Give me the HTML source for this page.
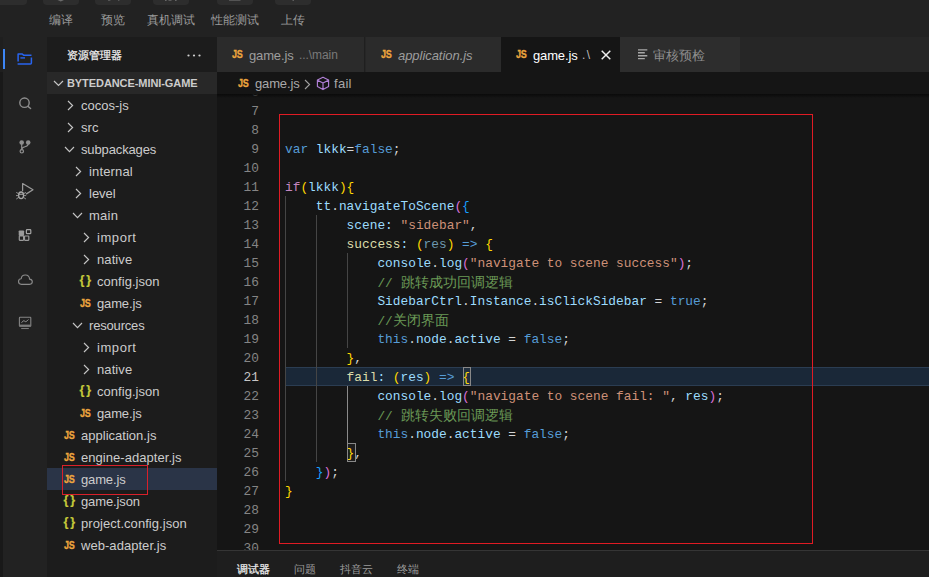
<!DOCTYPE html>
<html><head><meta charset="utf-8"><title>IDE</title>
<style>

html,body{margin:0;padding:0;}
body{width:929px;height:577px;overflow:hidden;background:#222222;position:relative;font-family:"Liberation Sans", sans-serif;font-size:13px;color:#cccccc;}
.abs{position:absolute;}
.tb-btn{position:absolute;top:-6px;height:10.5px;background:#2d2d2d;border-radius:4px;}
.tb-lbl{position:absolute;top:12.5px;height:14px;line-height:14px;font-size:12px;color:#9b9b9b;white-space:nowrap;}
#strip{left:0;top:37px;width:3px;height:540px;background:#191919;}
#act{left:3px;top:37px;width:44px;height:540px;background:#222222;}
#side{left:47px;top:37px;width:170px;height:540px;background:#1c1c1c;overflow:hidden;}
#side .title{position:absolute;left:20px;top:11px;height:14px;line-height:14px;font-size:11px;color:#f0f0f0;white-space:nowrap;-webkit-text-stroke:0.25px #f0f0f0;}
#side .dots{position:absolute;left:140px;top:16.5px;width:14px;height:3px;}
#side .hdr{position:absolute;left:0;top:35px;width:170px;height:22px;background:#282828;}
#side .hdr span{position:absolute;left:20px;top:0;line-height:22px;font-size:11px;font-weight:bold;color:#cccccc;white-space:nowrap;}
.row{position:absolute;left:0;width:170px;height:22px;line-height:22px;white-space:nowrap;color:#cccccc;font-size:13px;}
.row.sel{background:#2a3447;}
.row .lbl{position:absolute;top:1px;}
.row .ic{position:absolute;top:-0.5px;font-weight:bold;font-size:10.5px;line-height:22px;letter-spacing:-0.2px;transform:scaleX(0.86);transform-origin:0 50%;-webkit-text-stroke:0.3px currentColor;}
.ic.js{color:#eca53e;}
.ic.json{color:#c5c93a;font-size:12.5px !important;letter-spacing:1.9px !important;top:-1px !important;transform:none !important;-webkit-text-stroke:0.2px currentColor !important;}
.row svg{position:absolute;}
#ed{left:217px;top:37px;width:712px;height:540px;background:#151515;overflow:hidden;}
#tabs{position:absolute;left:0;top:0;width:712px;height:35px;background:#262626;}
.tab{position:absolute;top:0;height:35px;line-height:35px;font-size:13px;white-space:nowrap;box-sizing:border-box;}
.tab span{position:absolute;top:1px;}
.tab .ic{font-weight:bold;font-size:10.5px;letter-spacing:-0.2px;top:0;transform:scaleX(0.86);transform-origin:0 50%;-webkit-text-stroke:0.3px currentColor;}
#bc{position:absolute;left:0;top:35.5px;width:712px;height:22px;line-height:22px;font-size:13px;color:#a9a9a9;}
#bc span{position:absolute;top:0;white-space:nowrap;}
#bcshadow{position:absolute;left:0;top:57px;width:712px;height:4px;background:linear-gradient(#0a0a0a,rgba(10,10,10,0));}
#code{position:absolute;left:0;top:57px;width:712px;height:456px;overflow:hidden;}
.ln{position:absolute;left:0;width:42px;text-align:right;font-family:"Liberation Mono", monospace;font-size:12.83px;line-height:19px;height:19px;color:#858585;}
.cl{position:absolute;left:68px;font-family:"Liberation Mono", monospace;font-size:12.83px;line-height:19px;height:19px;white-space:pre;color:#d4d4d4;}
.guide{position:absolute;width:1px;background:#3a3a3a;}
.k{color:#569cd6;} .c{color:#c586c0;} .v{color:#9cdcfe;} .f{color:#dcdcaa;} .s{color:#ce9178;} .m{color:#6a9955;}
.cj{font-family:"Liberation Sans", sans-serif;font-size:14px;line-height:19px;}
.b1{color:#ffd700;} .b2{color:#da70d6;} .b3{color:#179fff;} .dim{color:#6d98b0;}
#hl{position:absolute;left:68px;top:273px;width:660px;height:19px;background:#1a2838;box-sizing:border-box;border:1px solid #2b3d52;}
#redbox{position:absolute;left:62px;top:20px;width:534px;height:430px;box-sizing:border-box;border:1px solid #e01b24;}
#panel{position:absolute;left:0;top:513px;width:712px;height:27px;background:#1e1e1e;border-top:1px solid #353535;box-sizing:border-box;}
#panel span{position:absolute;top:11px;font-size:11px;line-height:14px;color:#9a9a9a;white-space:nowrap;}

</style></head><body>
<div class="tb-btn" style="left:-6px;width:33px"></div>
<div class="tb-btn" style="left:43px;width:36px"></div>
<div class="tb-btn" style="left:95px;width:36px"></div>
<div class="tb-btn" style="left:153px;width:36px"></div>
<div class="tb-btn" style="left:217px;width:36px"></div>
<div class="tb-btn" style="left:275px;width:36px"></div>
<svg class="abs" style="left:0;top:0" width="320" height="3" viewBox="0 0 320 3"><path d="M57.5 0 L60.8 1.6 L64 0 Z" fill="#6a6a6a"/><rect x="108" y="0" width="2.4" height="0.8" fill="#5e5e5e"/><rect x="118" y="0" width="1.4" height="0.8" fill="#5e5e5e"/><rect x="165" y="0" width="1.6" height="1" fill="#666"/><rect x="168.5" y="0" width="3" height="0.8" fill="#666"/><rect x="175" y="0" width="1.6" height="1" fill="#666"/><rect x="229" y="0" width="11.5" height="0.9" fill="#5a5a5a"/><rect x="292.6" y="0" width="1.2" height="1" fill="#6a6a6a"/></svg>
<div class="tb-lbl" style="left:49px">编译</div>
<div class="tb-lbl" style="left:101px">预览</div>
<div class="tb-lbl" style="left:147px">真机调试</div>
<div class="tb-lbl" style="left:211px">性能测试</div>
<div class="tb-lbl" style="left:281px">上传</div>
<div id="strip" class="abs"></div><div class="abs" style="left:0;top:37px;width:3px;height:35px;background:#1f1f1f"></div>
<div id="act" class="abs">
<div class="abs" style="left:0;top:12px;width:2px;height:20px;background:#3d86f5"></div>
<svg class="abs" style="left:0;top:0" width="44" height="540" viewBox="3 37 44 540" fill="none" stroke-linecap="round" stroke-linejoin="round">
<!-- folder -->
<path d="M18.1 61.6 V54.1 H22.3 L23.9 55.3 H31.5" stroke="#2864f0" stroke-width="1.5" stroke-linecap="butt"/>
<path d="M31.4 57.4 V63 Q31.4 64 30.4 64 H17.6" stroke="#2864f0" stroke-width="1.5" stroke-linecap="butt"/>
<path d="M20.4 57.9 H25" stroke="#2864f0" stroke-width="1.4" stroke-linecap="butt"/>
<!-- search -->
<circle cx="24.5" cy="102.7" r="4.7" stroke="#8e8e8e" stroke-width="1.4"/>
<path d="M28 106.4 L30.6 108.5" stroke="#8e8e8e" stroke-width="1.4"/>
<!-- git -->
<circle cx="21.7" cy="142.5" r="2.3" fill="#8e8e8e"/>
<circle cx="28.2" cy="142.5" r="2.3" fill="#8e8e8e"/>
<circle cx="21.8" cy="151.3" r="1.7" stroke="#8e8e8e" stroke-width="1.2"/>
<path d="M21.7 144 V149.6 M28.2 144 C28.2 147.6 21.8 146 21.8 149.4" stroke="#8e8e8e" stroke-width="1.2"/>
<!-- debug -->
<path d="M22.6 190.4 V183.5 L33 189.7 L26.4 193.9" stroke="#9a9a9a" stroke-width="1.25"/>
<ellipse cx="21.1" cy="195.3" rx="2.5" ry="3.3" stroke="#a8a8a8" stroke-width="1.3"/>
<path d="M18.8 194.2 H23.4" stroke="#a8a8a8" stroke-width="1.1"/>
<path d="M16.6 192.6 L18.4 193.6 M16.4 195.6 H18.4 M16.6 198.8 L18.6 197.4 M25.6 192.6 L23.8 193.6 M25.8 195.6 H23.8 M25.6 198.8 L23.6 197.4" stroke="#a0a0a0" stroke-width="0.9"/>
<!-- blocks -->
<rect x="18.7" y="230.5" width="5.4" height="5.4" rx="0.8" fill="#9a9a9a"/>
<rect x="19.3" y="236" width="4.3" height="4.3" rx="0.5" stroke="#9a9a9a" stroke-width="1.2"/>
<rect x="24.5" y="236" width="4.3" height="4.3" rx="0.5" stroke="#9a9a9a" stroke-width="1.2"/>
<rect x="26.4" y="229.7" width="4.4" height="4" rx="0.8" stroke="#a5a5a5" stroke-width="1.2"/>
<!-- cloud -->
<path d="M21.4 284.3 H29.6 C33.2 284.3 33.2 279.4 29.6 279.1 C29.2 273.8 21.8 273.6 21.2 278.7 C17.6 278.8 17.6 284.3 21.4 284.3 Z" stroke="#8a8a8a" stroke-width="1.15"/>
<!-- monitor -->
<rect x="19.4" y="317.3" width="11.4" height="9" rx="0.6" stroke="#858585" stroke-width="1.1"/>
<rect x="19.4" y="324.6" width="11.4" height="1.9" fill="#7a7a7a"/>
<path d="M21.8 322.4 C22.8 320.6 24 320.4 25 321.4 C25.8 322 26.4 321.6 28.2 319.8" stroke="#a0a0a0" stroke-width="0.9"/>
<path d="M21.2 328.5 H28.8" stroke="#7a7a7a" stroke-width="1.1" stroke-linecap="butt"/>
</svg>
</div>
<div id="side" class="abs">
<div class="title">资源管理器</div>
<svg class="dots" viewBox="0 0 14 3"><circle cx="1.5" cy="1.5" r="1.1" fill="#d0d0d0"/><circle cx="7" cy="1.5" r="1.1" fill="#d0d0d0"/><circle cx="12.5" cy="1.5" r="1.1" fill="#d0d0d0"/></svg>
<div class="hdr"><svg class="abs" style="left:5.5px;top:8px" width="11" height="7" viewBox="0 0 11 7"><path d="M1 1 L5.5 5.5 L10 1" fill="none" stroke="#c5c5c5" stroke-width="1.2"/></svg><span style="letter-spacing:-0.079px">BYTEDANCE-MINI-GAME</span></div>
<div class="row" style="top:57px">
<svg style="left:20px;top:6px" width="7" height="11" viewBox="0 0 7 11"><path d="M1 1 L5.6 5.5 L1 10" fill="none" stroke="#c5c5c5" stroke-width="1.15"/></svg>
<span class="lbl" style="left:34px;letter-spacing:0.002px">cocos-js</span></div>
<div class="row" style="top:79px">
<svg style="left:20px;top:6px" width="7" height="11" viewBox="0 0 7 11"><path d="M1 1 L5.6 5.5 L1 10" fill="none" stroke="#c5c5c5" stroke-width="1.15"/></svg>
<span class="lbl" style="left:34px;letter-spacing:0.085px">src</span></div>
<div class="row" style="top:101px">
<svg style="left:16.7px;top:8px" width="11" height="7" viewBox="0 0 11 7"><path d="M1 1 L5.5 5.6 L10 1" fill="none" stroke="#c5c5c5" stroke-width="1.15"/></svg>
<span class="lbl" style="left:34px;letter-spacing:-0.13px">subpackages</span></div>
<div class="row" style="top:123px">
<svg style="left:28px;top:6px" width="7" height="11" viewBox="0 0 7 11"><path d="M1 1 L5.6 5.5 L1 10" fill="none" stroke="#c5c5c5" stroke-width="1.15"/></svg>
<span class="lbl" style="left:42px;letter-spacing:0.157px">internal</span></div>
<div class="row" style="top:145px">
<svg style="left:28px;top:6px" width="7" height="11" viewBox="0 0 7 11"><path d="M1 1 L5.6 5.5 L1 10" fill="none" stroke="#c5c5c5" stroke-width="1.15"/></svg>
<span class="lbl" style="left:42px;letter-spacing:-0.01px">level</span></div>
<div class="row" style="top:167px">
<svg style="left:24.7px;top:8px" width="11" height="7" viewBox="0 0 11 7"><path d="M1 1 L5.5 5.6 L10 1" fill="none" stroke="#c5c5c5" stroke-width="1.15"/></svg>
<span class="lbl" style="left:42px;letter-spacing:0.253px">main</span></div>
<div class="row" style="top:189px">
<svg style="left:36px;top:6px" width="7" height="11" viewBox="0 0 7 11"><path d="M1 1 L5.6 5.5 L1 10" fill="none" stroke="#c5c5c5" stroke-width="1.15"/></svg>
<span class="lbl" style="left:50px;letter-spacing:0.562px">import</span></div>
<div class="row" style="top:211px">
<svg style="left:36px;top:6px" width="7" height="11" viewBox="0 0 7 11"><path d="M1 1 L5.6 5.5 L1 10" fill="none" stroke="#c5c5c5" stroke-width="1.15"/></svg>
<span class="lbl" style="left:50px;letter-spacing:0.099px">native</span></div>
<div class="row" style="top:233px">
<span class="ic json" style="left:32.4px">{}</span>
<span class="lbl" style="left:50px;letter-spacing:0.04px">config.json</span></div>
<div class="row" style="top:255px">
<span class="ic js" style="left:33px">JS</span>
<span class="lbl" style="left:50px;letter-spacing:-0.147px">game.js</span></div>
<div class="row" style="top:277px">
<svg style="left:24.7px;top:8px" width="11" height="7" viewBox="0 0 11 7"><path d="M1 1 L5.5 5.6 L10 1" fill="none" stroke="#c5c5c5" stroke-width="1.15"/></svg>
<span class="lbl" style="left:42px;letter-spacing:-0.175px">resources</span></div>
<div class="row" style="top:299px">
<svg style="left:36px;top:6px" width="7" height="11" viewBox="0 0 7 11"><path d="M1 1 L5.6 5.5 L1 10" fill="none" stroke="#c5c5c5" stroke-width="1.15"/></svg>
<span class="lbl" style="left:50px;letter-spacing:0.562px">import</span></div>
<div class="row" style="top:321px">
<svg style="left:36px;top:6px" width="7" height="11" viewBox="0 0 7 11"><path d="M1 1 L5.6 5.5 L1 10" fill="none" stroke="#c5c5c5" stroke-width="1.15"/></svg>
<span class="lbl" style="left:50px;letter-spacing:0.099px">native</span></div>
<div class="row" style="top:343px">
<span class="ic json" style="left:32.4px">{}</span>
<span class="lbl" style="left:50px;letter-spacing:0.04px">config.json</span></div>
<div class="row" style="top:365px">
<span class="ic js" style="left:33px">JS</span>
<span class="lbl" style="left:50px;letter-spacing:-0.147px">game.js</span></div>
<div class="row" style="top:387px">
<span class="ic js" style="left:17px">JS</span>
<span class="lbl" style="left:34px;letter-spacing:0.017px">application.js</span></div>
<div class="row" style="top:409px">
<span class="ic js" style="left:17px">JS</span>
<span class="lbl" style="left:34px;letter-spacing:0.05px">engine-adapter.js</span></div>
<div class="row sel" style="top:431px">
<span class="ic js" style="left:17px">JS</span>
<span class="lbl" style="left:34px;letter-spacing:-0.147px">game.js</span></div>
<div class="row" style="top:453px">
<span class="ic json" style="left:16.4px">{}</span>
<span class="lbl" style="left:34px;letter-spacing:-0.12px">game.json</span></div>
<div class="row" style="top:475px">
<span class="ic json" style="left:16.4px">{}</span>
<span class="lbl" style="left:34px;letter-spacing:0.054px">project.config.json</span></div>
<div class="row" style="top:497px">
<span class="ic js" style="left:17px">JS</span>
<span class="lbl" style="left:34px;letter-spacing:0.046px">web-adapter.js</span></div>
<div class="abs" style="left:15px;top:428px;width:86px;height:30px;box-sizing:border-box;border:1px solid #d9202a"></div>
</div>
<div id="ed" class="abs">
<div id="tabs">
<div class="tab" style="left:0;width:148px;background:#2b2b2b;border-right:1px solid #1f1f1f"><span class="ic js" style="left:15px">JS</span><span style="left:32px;color:#9d9d9d;letter-spacing:-0.147px">game.js</span><span style="left:82px;color:#7a7a7a;font-size:12px;letter-spacing:-0.07px">...\main</span></div>
<div class="tab" style="left:149px;width:135px;background:#2b2b2b"><span class="ic js" style="left:15px">JS</span><span style="left:32px;color:#9d9d9d;font-style:italic;letter-spacing:-0.047px">application.js</span></div>
<div class="tab" style="left:284px;width:119px;background:#151515"><span class="ic js" style="left:15px">JS</span><span style="left:32px;color:#ffffff;letter-spacing:-0.147px">game.js</span><span style="left:81px;color:#bdbdbd;font-size:12px;letter-spacing:1.5px">.\</span><svg class="abs" style="left:99.5px;top:12.5px" width="10" height="10" viewBox="0 0 10 10"><path d="M0.7 0.7 L9.3 9.3 M9.3 0.7 L0.7 9.3" stroke="#f0f0f0" stroke-width="1.45" fill="none"/></svg></div>
<div class="tab" style="left:403px;width:120px;background:#2d2d2d"><svg class="abs" style="left:17.8px;top:11.6px" width="10" height="11" viewBox="0 0 10 11"><path d="M0 0.9 H9.3 M0 3.8 H6.8 M0 6.7 H9.3 M0 9.6 H6.8" stroke="#a8a8a8" stroke-width="1.4" fill="none"/></svg><span style="left:33px;color:#8f8f8f">审核预检</span></div>
</div>
<div id="bc"><span class="ic js" style="left:21px;top:-1px;font-weight:bold;font-size:10.5px;letter-spacing:-0.2px;transform:scaleX(0.86);transform-origin:0 50%;-webkit-text-stroke:0.3px currentColor">JS</span><span style="left:38px;letter-spacing:-0.147px">game.js</span>
<svg class="abs" style="left:87px;top:6px" width="7" height="11" viewBox="0 0 7 11"><path d="M1 1 L5.6 5.5 L1 10" fill="none" stroke="#a0a0a0" stroke-width="1.1"/></svg>
<svg class="abs" style="left:99px;top:3.5px" width="14" height="15" viewBox="0 0 14 15"><path d="M7 1.2 L12.6 4 V10.6 L7 13.6 L1.4 10.6 V4 Z M1.6 4.2 L7 7 L12.4 4.2 M7 7 V13.4" fill="none" stroke="#b180d7" stroke-width="1.15" stroke-linejoin="round"/></svg>
<span style="left:117px;letter-spacing:0.294px">fail</span></div>
<div id="code">
<div id="hl"></div>
<div class="guide" style="left:68px;top:102px;height:285px;background:#454545"></div>
<div class="guide" style="left:99px;top:121px;height:247px;background:#454545"></div>
<div class="guide" style="left:130px;top:159px;height:95px;background:#454545"></div>
<div class="guide" style="left:130px;top:292px;height:57px;background:#8a8a8a"></div>
<div class="ln" style="top:-11px">6</div>
<div class="ln" style="top:8px">7</div>
<div class="ln" style="top:27px">8</div>
<div class="ln" style="top:46px">9</div>
<div class="cl" style="top:46px"><span class="k">var</span> <span class="v">lkkk</span>=<span class="k">false</span>;</div>
<div class="ln" style="top:65px">10</div>
<div class="ln" style="top:84px">11</div>
<div class="cl" style="top:84px"><span class="c">if</span><span class="b1">(</span><span class="v">lkkk</span><span class="b1">){</span></div>
<div class="ln" style="top:103px">12</div>
<div class="cl" style="top:103px">    <span class="v">tt</span>.<span class="v">navigateToScene</span><span class="b2">(</span><span class="b3">{</span></div>
<div class="ln" style="top:122px">13</div>
<div class="cl" style="top:122px">        <span class="v">scene</span><span class="v">:</span> <span class="s">"sidebar"</span>,</div>
<div class="ln" style="top:141px">14</div>
<div class="cl" style="top:141px">        <span class="f">success</span><span class="v">:</span> <span class="b1">(</span><span class="dim">res</span><span class="b1">)</span> <span class="k">=&gt;</span> <span class="b1">{</span></div>
<div class="ln" style="top:160px">15</div>
<div class="cl" style="top:160px">            <span class="v">console</span>.<span class="v">log</span><span class="b2">(</span><span class="s">"navigate to scene success"</span><span class="b2">)</span>;</div>
<div class="ln" style="top:179px">16</div>
<div class="cl" style="top:179px">            <span class="m">// <span class="cj">跳转成功回调逻辑</span></span></div>
<div class="ln" style="top:198px">17</div>
<div class="cl" style="top:198px">            <span class="v">SidebarCtrl</span>.<span class="v">Instance</span>.<span class="v">isClickSidebar</span> = <span class="k">true</span>;</div>
<div class="ln" style="top:217px">18</div>
<div class="cl" style="top:217px">            <span class="m">//<span class="cj">关闭界面</span></span></div>
<div class="ln" style="top:236px">19</div>
<div class="cl" style="top:236px">            <span class="k">this</span>.<span class="v">node</span>.<span class="v">active</span> = <span class="k">false</span>;</div>
<div class="ln" style="top:255px">20</div>
<div class="cl" style="top:255px">        <span class="b1">}</span>,</div>
<div class="ln" style="top:274px;color:#c6c6c6">21</div>
<div class="cl" style="top:274px">        <span class="f">fail</span><span class="v">:</span> <span class="b1">(</span><span class="v">res</span><span class="b1">)</span> <span class="k">=&gt;</span> <span class="b1">{</span></div>
<div class="ln" style="top:293px">22</div>
<div class="cl" style="top:293px">            <span class="v">console</span>.<span class="v">log</span><span class="b2">(</span><span class="s">"navigate to scene fail: "</span>, <span class="v">res</span><span class="b2">)</span>;</div>
<div class="ln" style="top:312px">23</div>
<div class="cl" style="top:312px">            <span class="m">// <span class="cj">跳转失败回调逻辑</span></span></div>
<div class="ln" style="top:331px">24</div>
<div class="cl" style="top:331px">            <span class="k">this</span>.<span class="v">node</span>.<span class="v">active</span> = <span class="k">false</span>;</div>
<div class="ln" style="top:350px">25</div>
<div class="cl" style="top:350px">        <span class="b1">}</span>,</div>
<div class="ln" style="top:369px">26</div>
<div class="cl" style="top:369px">    <span class="b3">}</span><span class="b2">)</span>;</div>
<div class="ln" style="top:388px">27</div>
<div class="cl" style="top:388px"><span class="b1">}</span></div>
<div class="ln" style="top:407px">28</div>
<div class="ln" style="top:426px">29</div>
<div class="ln" style="top:445px">30</div>
<div class="abs" style="left:245.5px;top:273px;width:8.6px;height:19px;box-sizing:border-box;border:1px solid #888;background:rgba(255,255,255,0.04)"></div>
<div class="abs" style="left:130.3px;top:349px;width:8.6px;height:19px;box-sizing:border-box;border:1px solid #888;background:rgba(255,255,255,0.04)"></div>
<div id="redbox"></div>
</div>
<div id="bcshadow"></div>
<div id="panel">
<span style="left:20px;color:#f0f0f0;-webkit-text-stroke:0.25px #f0f0f0">调试器</span>
<span style="left:77px;color:#9a9a9a">问题</span>
<span style="left:123px;color:#9a9a9a">抖音云</span>
<span style="left:180px;color:#9a9a9a">终端</span>
</div>
</div>
</body></html>
